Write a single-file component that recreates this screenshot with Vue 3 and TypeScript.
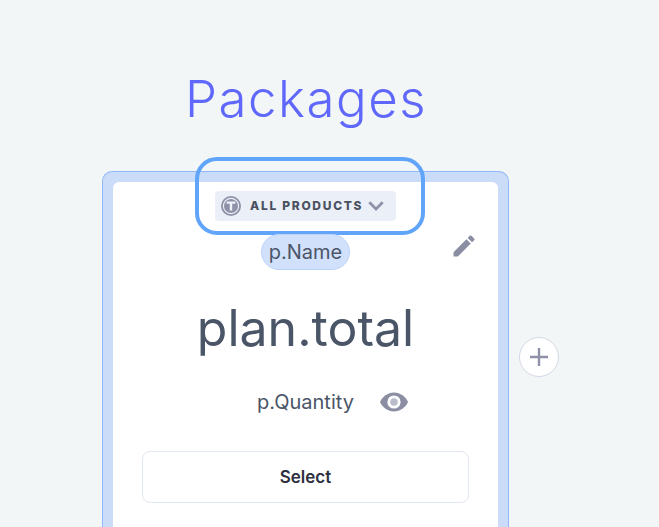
<script setup lang="ts">
const title: string = 'Packages'
</script>

<template>
  <main class="page">
    <h1 class="title">{{ title }}</h1>
    <div class="row">
      <section class="frame">
        <div class="card">
          <div class="picker-wrap">
            <div class="picker">
              <svg class="logo" width="20" height="20" viewBox="0 0 20 20">
                <circle cx="10" cy="10" r="10" fill="#8e91a8" />
                <circle cx="10" cy="10" r="7.6" fill="none" stroke="#eef1f8" stroke-width="1.1" />
                <path d="M5.600 5.600h8.800v2.200h-3.200v6.800H8.800V7.800H5.600z" fill="#eef1f8" />
              </svg>
              <span class="picker-text">ALL PRODUCTS</span>
              <svg class="chev" width="16" height="10" viewBox="0 0 16 10">
                <path d="M1.300 1.300 8 8l6.700-6.700" fill="none" stroke="#8e91a8" stroke-width="2.800" />
              </svg>
            </div>
            <div class="highlight"></div>
          </div>
          <div class="name-row">
            <span class="chip">p.Name</span>
            <svg class="pencil" width="28" height="28" viewBox="0 0 24 24">
              <path d="M3 17.250V21h3.750L17.810 9.940l-3.750-3.750L3 17.250zM20.710 7.040a1 1 0 0 0 0-1.410l-2.340-2.340a1 1 0 0 0-1.410 0l-1.830 1.830 3.750 3.750 1.830-1.830z" fill="#8b8ea3" />
            </svg>
          </div>
          <div class="total">plan.total</div>
          <div class="qty-row">
            <span class="qty">p.Quantity</span>
            <svg class="eye" width="30" height="20" viewBox="0 0 30 20">
              <path d="M15 .5C8.600 .5 3.400 4.800 1 10c2.400 5.200 7.600 9.500 14 9.500S26.600 15.200 29 10C26.600 4.800 21.400 .5 15 .5z" fill="#8b8ea3" />
              <circle cx="15" cy="10" r="6.600" fill="#fff" />
              <circle cx="15" cy="10" r="3.800" fill="#b9bccb" />
            </svg>
          </div>
          <button class="select" type="button">Select</button>
        </div>
      </section>
      <button class="add" type="button" aria-label="Add">
        <svg width="20" height="20" viewBox="0 0 20 20">
          <path d="M10 1v18M1 10h18" stroke="#8e91a8" stroke-width="2.400" fill="none" />
        </svg>
      </button>
    </div>
  </main>
</template>

<style>
html, body { margin: 0; background: #f2f6f7; overflow: hidden; }
</style>

<style scoped>
.page {
  height: 527px;
  overflow: hidden;
  padding-top: 67px;
  box-sizing: border-box;
  font-family: Inter, "Liberation Sans", sans-serif;
  background: #f2f6f7;
}
.title {
  margin: 0 0 41px 185px;
  font-size: 51px;
  line-height: 63px;
  font-weight: 300;
  letter-spacing: 1.5px;
  color: #6068fc;
}
.row { display: flex; align-items: flex-start; padding-left: 102px; }
.frame {
  width: 407px;
  box-sizing: border-box;
  padding: 10px 10px 0;
  border: 1px solid #8fb8fb;
  border-bottom: 0;
  border-radius: 10px 10px 0 0;
  background: #cbdcf8;
  flex: none;
}
.card {
  height: 360px;
  background: #fff;
  border-radius: 6px 6px 0 0;
  display: flex;
  flex-direction: column;
  align-items: center;
}
.picker-wrap { position: relative; margin-top: 9px; }
.picker {
  display: flex;
  align-items: center;
  width: 181px;
  height: 30px;
  box-sizing: border-box;
  padding: 0 0 1px 6px;
  border-radius: 4px;
  background: #ebf0f8;
}
.logo { flex: none; }
.picker-text {
  margin-left: 9px;
  font-size: 12px;
  font-weight: 800;
  letter-spacing: 1.7px;
  color: #4a5160;
  white-space: nowrap;
}
.chev { margin-left: 5px; flex: none; }
.highlight {
  position: absolute;
  left: -20px;
  top: -34px;
  width: 230px;
  height: 78px;
  box-sizing: border-box;
  border: 4px solid #60a5fa;
  border-radius: 22px;
  pointer-events: none;
}
.name-row {
  position: relative;
  align-self: stretch;
  display: flex;
  justify-content: center;
  margin-top: 13px;
}
.chip {
  height: 36px;
  box-sizing: border-box;
  padding: 0 7px;
  border: 1px solid #bcd3fa;
  border-radius: 18px;
  background: #d2e1fb;
  font-size: 20px;
  line-height: 34px;
  color: #4a5568;
}
.pencil { position: absolute; right: 20px; top: -2px; }
.total {
  margin-top: 28px;
  font-size: 50px;
  line-height: 60px;
  font-weight: 400;
  color: #4a5568;
}
.qty-row {
  display: flex;
  align-items: center;
  margin-top: 28px;
  height: 32px;
  padding-left: 55px;
}
.qty { font-size: 20px; color: #4a5568; margin-right: 25px; }
.select {
  margin-top: 33px;
  width: 327px;
  height: 52px;
  border: 1px solid #e2e8f0;
  border-radius: 8px;
  background: #fff;
  font: 600 17px Inter, "Liberation Sans", sans-serif;
  color: #2d3040;
}
.add {
  flex: none;
  width: 40px;
  height: 40px;
  margin: 166px 0 0 10px;
  padding: 0;
  display: flex;
  align-items: center;
  justify-content: center;
  border: 1px solid #d5d8e6;
  border-radius: 50%;
  background: #fff;
}
</style>
